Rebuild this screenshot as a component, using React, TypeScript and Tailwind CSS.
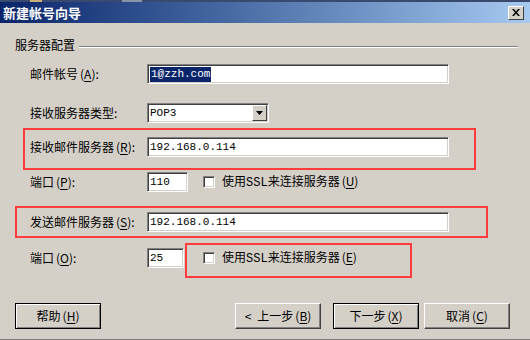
import React from 'react';

const cjk = "font-['SimSun','Noto_Sans_CJK_SC',sans-serif]";
const mono = "font-['Liberation_Mono','Noto_Sans_CJK_SC',monospace]";

// sunken win-classic edit field
const sunken =
  'bg-white border border-t-[#808080] border-l-[#808080] border-b-white border-r-white shadow-[inset_1px_1px_#404040,inset_-1px_-1px_#d4d0c8]';

const Acc: React.FC<{ k: string }> = ({ k }) => (
  <span className="ml-[2px]">
    (<span className="underline underline-offset-2">{k}</span>)
  </span>
);

const Label: React.FC<{ text: string; k?: string }> = ({ text, k }) => (
  <div className={`w-[117px] shrink-0 text-[12px] leading-4 text-black ${cjk}`}>
    {text}
    {k && <Acc k={k} />}:
  </div>
);

const Edit: React.FC<{ value: string; w: string; selected?: boolean }> = ({ value, w, selected }) => (
  <div className={`${w} h-[20px] ${sunken} flex items-center pl-[2px] text-[11px] text-black ${mono}`}>
    {selected ? <span className="bg-[#0a246a] text-white leading-[15px] px-[1px]">{value}</span> : value}
  </div>
);

const Check: React.FC<{ k: string }> = ({ k }) => (
  <div className="flex items-center">
    <div className={`w-[12px] h-[12px] ${sunken}`} />
    <div className={`ml-[7px] text-[12px] leading-4 ${cjk}`}>
      使用<span className={mono}>SSL</span>来连接服务器
      <Acc k={k} />
    </div>
  </div>
);

const Btn: React.FC<{ text: string; k: string; pre?: string; strong?: boolean; cls?: string }> = ({
  text,
  k,
  pre,
  strong,
  cls = '',
}) => (
  <div
    className={`w-[86px] h-[26px] flex items-center justify-center text-[12px] ${cjk} bg-[#d4d0c8] border ${
      strong
        ? 'border-black shadow-[inset_1px_1px_white,inset_-1px_-1px_#808080]'
        : 'border-t-white border-l-white border-r-[#404040] border-b-[#404040] shadow-[inset_-1px_-1px_#808080]'
    } ${cls}`}
  >
    {pre && <span className="mr-[6px]">{pre}</span>}
    {text}
    <Acc k={k} />
  </div>
);

export default function App() {
  return (
    <div className="relative w-[530px] h-[340px] overflow-hidden bg-[#d4d0c8] border-b border-b-[#808080]">
      {/* strip of the window behind */}
      <div className="h-[2px] flex bg-[#3a4a6e]">
        <div className="ml-[30px] w-[12px] bg-[#c9b27a]" />
        <div className="ml-[80px] w-[20px] bg-[#8b93a8]" />
      </div>

      {/* title bar */}
      <div className="h-[21px] flex items-center justify-between pl-[3px] pr-[6px] bg-gradient-to-r from-[#0a246a] to-[#a6caf0]">
        <div className={`text-white font-bold text-[13px] leading-4 ${cjk}`}>新建帐号向导</div>
        <div className="w-[16px] h-[14px] bg-[#d4d0c8] border border-t-white border-l-white border-r-[#404040] border-b-[#404040] flex items-center justify-center">
          <svg width="8" height="7" viewBox="0 0 8 7">
            <path d="M0 0h2l2 2.5L6 0h2L5 3.5 8 7H6L4 4.5 2 7H0l3-3.5z" fill="black" />
          </svg>
        </div>
      </div>

      {/* group */}
      <div className="pt-[14px]">
        <div className="flex items-center pl-[15px] pr-[12px]">
          <div className={`text-[12px] leading-4 ${cjk}`}>服务器配置</div>
          <div className="flex-1 ml-[4px] mt-[3px] border-t border-t-[#808080] border-b border-b-white" />
        </div>

        <div className="pl-[30px]">
          <div className="mt-[11px] flex items-center">
            <Label text="邮件帐号" k="A" />
            <Edit value="1@zzh.com" w="w-[302px]" selected />
          </div>

          <div className="mt-[19px] flex items-center">
            <Label text="接收服务器类型" />
            <div className={`w-[122px] h-[20px] ${sunken} flex items-center justify-between pl-[2px] pr-[1px] text-[11px] ${mono}`}>
              POP3
              <div className="w-[15px] h-[16px] bg-[#d4d0c8] border border-t-white border-l-white border-r-[#404040] border-b-[#404040] flex items-center justify-center">
                <svg width="7" height="4" viewBox="0 0 7 4">
                  <path d="M0 0h7L3.5 4z" fill="black" />
                </svg>
              </div>
            </div>
          </div>

          <div className="mt-[14px] flex items-center">
            <Label text="接收邮件服务器" k="R" />
            <Edit value="192.168.0.114" w="w-[302px]" />
          </div>

          <div className="mt-[15px] flex items-center">
            <Label text="端口" k="P" />
            <div className="w-[56px]">
              <Edit value="110" w="w-[41px]" />
            </div>
            <Check k="U" />
          </div>

          <div className="mt-[20px] flex items-center">
            <Label text="发送邮件服务器" k="S" />
            <Edit value="192.168.0.114" w="w-[302px]" />
          </div>

          <div className="mt-[16px] flex items-center">
            <Label text="端口" k="O" />
            <div className="w-[56px]">
              <Edit value="25" w="w-[37px]" />
            </div>
            <Check k="E" />
          </div>
        </div>

        {/* buttons */}
        <div className="mt-[35px] flex items-center pl-[15px]">
          <Btn text="帮助" k="H" strong />
          <Btn text="上一步" k="B" pre="<" cls="ml-[134px]" />
          <Btn text="下一步" k="X" strong cls="ml-[12px]" />
          <Btn text="取消" k="C" cls="ml-[5px]" />
        </div>
      </div>

      {/* red annotation boxes */}
      <div className="absolute left-[23px] top-[128px] w-[453px] h-[42px] border-2 border-[#ff3b3b]" />
      <div className="absolute left-[15px] top-[206px] w-[473px] h-[32px] border-2 border-[#ff3b3b]" />
      <div className="absolute left-[185px] top-[243px] w-[227px] h-[35px] border-2 border-[#ff3b3b]" />
    </div>
  );
}
